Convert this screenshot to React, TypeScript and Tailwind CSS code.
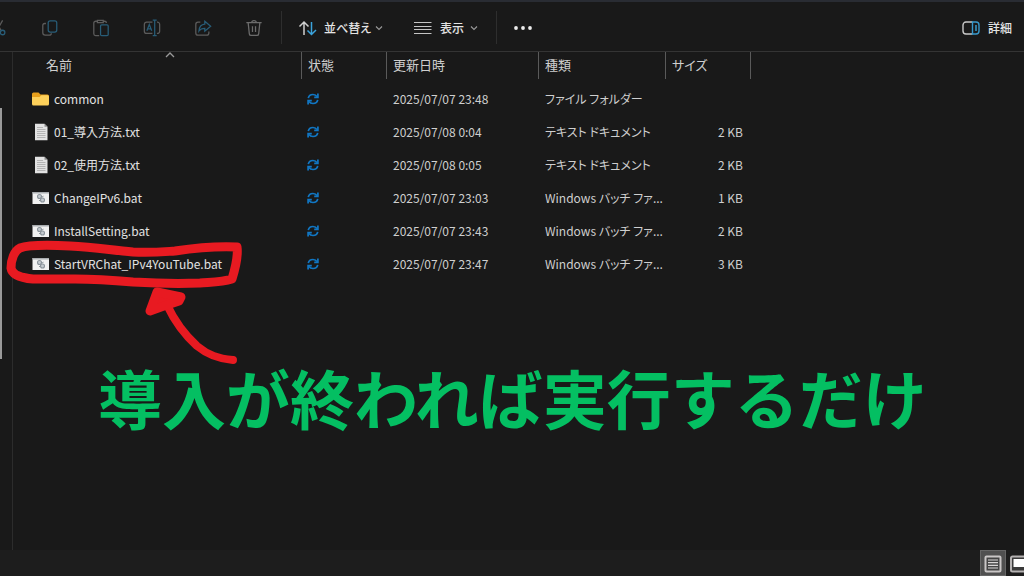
import React from 'react';

interface FileItem {
  name: string;
  date: string;
  type: string;
  size: string;
  icon: 'folder' | 'text' | 'batch';
}

const files: FileItem[] = [
  { name: 'common', date: '2025/07/07 23:48', type: 'ファイル フォルダー', size: '', icon: 'folder' },
  { name: '01_導入方法.txt', date: '2025/07/08 0:04', type: 'テキスト ドキュメント', size: '2 KB', icon: 'text' },
  { name: '02_使用方法.txt', date: '2025/07/08 0:05', type: 'テキスト ドキュメント', size: '2 KB', icon: 'text' },
  { name: 'ChangeIPv6.bat', date: '2025/07/07 23:03', type: 'Windows バッチ ファ...', size: '1 KB', icon: 'batch' },
  { name: 'InstallSetting.bat', date: '2025/07/07 23:43', type: 'Windows バッチ ファ...', size: '2 KB', icon: 'batch' },
  { name: 'StartVRChat_IPv4YouTube.bat', date: '2025/07/07 23:47', type: 'Windows バッチ ファ...', size: '3 KB', icon: 'batch' },
];

const FileIcon: React.FC<{ kind: FileItem['icon'] }> = ({ kind }) => {
  if (kind === 'folder') {
    return (
      <svg viewBox="0 0 18 16" className="w-[18px] h-4">
        <path d="M0 3a1.500 1.500 0 0 1 1.500-1.500h5L8.500 3.500H15.500A1.500 1.500 0 0 1 17 5v2H0z" fill="#e8a01c" />
        <path d="M0 6h7.500l2-1.700h6A1.500 1.500 0 0 1 17 5.800V13a1.500 1.500 0 0 1-1.500 1.500h-14A1.500 1.500 0 0 1 0 13z" fill="#fdd05a" />
      </svg>
    );
  }
  if (kind === 'text') {
    return (
      <svg viewBox="0 0 18 18" className="w-[18px] h-[18px]">
        <path d="M3 .8h9.500l3 3V17.200H3z" fill="#e2e2e2" />
        <path d="M12.500.8v3h3z" fill="#8c8c8c" />
        <path d="M5 4.500h6M5 6.500h8.500M5 8.500h8.500M5 10.500h8.500M5 12.500h8.500M5 14.500h8.500" stroke="#a8a8a8" strokeWidth=".8" />
      </svg>
    );
  }
  return (
    <svg viewBox="0 0 18 14" className="w-[18px] h-3.5">
      <path d="M.5 1H17v12H.5z" fill="#f1f1f1" />
      <path d="M.5 1H17v1.500H.5z" fill="#a9adb0" />
      <circle cx="7.500" cy="5.500" r="2" fill="#c5cbd0" stroke="#8a939a" strokeWidth="1.100" />
      <circle cx="10.500" cy="9" r="2" fill="#c5cbd0" stroke="#8a939a" strokeWidth="1.100" />
      <path d="M8.500 8.500 7 10M10 6l1.500-.8" stroke="#8b949b" strokeWidth="1" />
    </svg>
  );
};

const SyncIcon = () => (
  <svg viewBox="0 0 12 12" className="w-3 h-3" fill="none" stroke="#1177c4" strokeWidth="1.700">
    <path d="M1.300 5.200C1.700 3 3.600 1.500 6 1.500c1.700 0 3.200.8 4 2.200M10.700 6.800c-.4 2.200-2.300 3.700-4.700 3.700-1.700 0-3.200-.8-4-2.200" />
    <path d="M10.900.5v3.800H7.200M1.100 11.500V7.700h3.700" />
  </svg>
);

const Chevron = () => (
  <svg viewBox="0 0 8 8" className="w-2 h-2" fill="none" stroke="#9a9a9a" strokeWidth="1.100">
    <path d="M1 2.500 4 5.500l3-3" />
  </svg>
);

const tools = [
  {
    label: '切り取り',
    art: (
      <>
        <path d="m6 1.500 6.500 11.500M14 1.500 7.500 13" stroke="#5c5c5c" />
        <circle cx="6" cy="15" r="2.500" stroke="#285d78" />
        <circle cx="14" cy="15" r="2.500" stroke="#285d78" />
      </>
    ),
  },
  {
    label: 'コピー',
    art: (
      <>
        <path d="M5.500 5H4.300A2.300 2.300 0 0 0 2 7.300v8A2.700 2.700 0 0 0 4.700 18h4.500a2.300 2.300 0 0 0 2.300-2.200" stroke="#5c5c5c" />
        <rect x="8" y="2" width="9.500" height="12.500" rx="2.200" stroke="#285d78" />
      </>
    ),
  },
  {
    label: '貼り付け',
    art: (
      <>
        <path d="M8 18.500H4A2 2 0 0 1 2 16.500V4.500a2 2 0 0 1 2-2h1.500M12.500 2.500H14a2 2 0 0 1 2 2M6 1.500h6.500v2.500H6z" stroke="#5c5c5c" />
        <rect x="9.500" y="6.500" width="8.500" height="12" rx="1.300" stroke="#285d78" />
      </>
    ),
  },
  {
    label: '名前の変更',
    art: (
      <>
        <path d="M10.500 3.500H4A2.500 2.500 0 0 0 1.500 6v7.500A2.500 2.500 0 0 0 4 16h6.500M15.500 3.500A2.500 2.500 0 0 1 18.500 6v7.500a2.500 2.500 0 0 1-3 2.500" stroke="#5c5c5c" />
        <path d="M13 1.500v17M10.800 1.200h4.400M10.800 18.500h4.400M4.300 13l2.700-7 2.700 7M5.200 11h3.600" stroke="#285d78" />
      </>
    ),
  },
  {
    label: '共有',
    art: (
      <>
        <path d="M7 3.500H4.500A2.500 2.500 0 0 0 2 6v9.500A2.500 2.500 0 0 0 4.500 18H14a2.500 2.500 0 0 0 2.500-2.500V14" stroke="#5c5c5c" />
        <path d="M12 2.500 18.500 8 12 13.500v-3.200c-3 0-5 .7-6.500 3C5.800 9 8 6 12 5.700z" stroke="#285d78" />
      </>
    ),
  },
  {
    label: '削除',
    art: (
      <path d="M1.500 4h17M7.500 4c0-3 5-3 5 0M3.500 4l1.300 12.500a2 2 0 0 0 2 1.800h6.400a2 2 0 0 0 2-1.800L16.500 4M8.300 8v6.500M11.700 8v6.500" stroke="#6c6c6c" />
    ),
  },
];

const Toolbar = () => (
  <div className="h-[52px] shrink-0 flex items-center border-t-2 border-b border-t-[#292c33] border-b-[#343434] overflow-hidden pt-0.5 text-xs font-medium text-[#e4e4e4]">
    <div className="flex -ml-[27px]">
      {tools.map((tool) => (
        <button key={tool.label} aria-label={tool.label} className="w-[51px] h-9 shrink-0 flex items-center justify-center">
          <svg viewBox="0 0 20 20" className="w-[18px] h-[18px]" fill="none" strokeWidth="1.400">
            {tool.art}
          </svg>
        </button>
      ))}
    </div>
    <div className="w-px h-[33px] ml-0.5 bg-[#2e2e2e]" />
    <button className="flex items-center ml-4">
      <svg viewBox="0 0 20 16" className="w-5 h-4 mr-1.5" fill="none" strokeWidth="1.500">
        <path d="M6 15V2M1.500 6.500 6 2l4.500 4.500" stroke="#d0d0d0" />
        <path d="M13.500 2v12.500M9.500 10.500l4 4 4.500-4.500" stroke="#3ba3dc" />
      </svg>
      <span className="mr-1">並べ替え</span>
      <Chevron />
    </button>
    <button className="flex items-center ml-[31px]">
      <svg viewBox="0 0 18 14" className="w-[18px] h-3.5 mr-2" fill="none" stroke="#c4c4c4" strokeWidth="1">
        <path d="M0 1.500h17.500M0 5.500h17.500M0 8.500h17.500M0 12.500h17.500" />
      </svg>
      <span className="mr-1.5">表示</span>
      <Chevron />
    </button>
    <div className="w-px h-[33px] ml-[18px] bg-[#2e2e2e]" />
    <button aria-label="もっと見る" className="ml-4">
      <svg viewBox="0 0 20 6" className="w-5 h-1.5" fill="#ececec">
        <circle cx="3" cy="3" r="1.900" />
        <circle cx="10" cy="3" r="1.900" />
        <circle cx="17" cy="3" r="1.900" />
      </svg>
    </button>
    <button className="flex items-center ml-auto mr-3 gap-2">
      <svg viewBox="0 0 18 14" className="w-[18px] h-3.5" fill="none" strokeWidth="1.400">
        <path d="M10.500 1H4a3 3 0 0 0-3 3v6a3 3 0 0 0 3 3h6.500" stroke="#c8c8c8" />
        <path d="M10.500 1H14a3 3 0 0 1 3 3v6a3 3 0 0 1-3 3h-3.500zM13 5h2M13 7h2M13 9h2" stroke="#3799cc" />
      </svg>
      詳細
    </button>
  </div>
);

const headers = ['名前', '状態', '更新日時', '種類', 'サイズ'];

const FileTable = () => (
  <table className="w-full table-fixed text-left text-xs text-[#cfcfcf]">
    <colgroup>
      <col className="w-[289px]" />
      <col className="w-[85px]" />
      <col className="w-[152px]" />
      <col className="w-[127px]" />
      <col className="w-[85px]" />
      <col />
    </colgroup>
    <thead>
      <tr>
        {headers.map((header, index) => (
          <th key={header} className="p-0 pb-[3px] font-normal text-[13px]">
            <div className={`relative h-[27px] pb-0.5 flex items-center border-r border-[#5a5a5a] ${index === 0 ? 'pl-[33px]' : 'pl-1.5'}`}>
              {header}
              {index === 0 && (
                <svg viewBox="0 0 10 6" className="absolute top-0 left-[152px] w-2.5 h-1.5" fill="none" stroke="#9a9a9a" strokeWidth="1.300">
                  <path d="M1 5l4-4 4 4" />
                </svg>
              )}
            </div>
          </th>
        ))}
        <td></td>
      </tr>
    </thead>
    <tbody>
      {files.map((file) => (
        <tr key={file.name} className="h-[33px] whitespace-nowrap">
          <td className="p-0 pl-[19px]">
            <div className="flex items-center gap-1 text-[#e2e2e2]">
              <FileIcon kind={file.icon} />
              {file.name}
            </div>
          </td>
          <td className="p-0 pl-[5px]">
            <SyncIcon />
          </td>
          <td className="p-0 pl-1.5">{file.date}</td>
          <td className="p-0 pl-1.5">{file.type}</td>
          <td className="p-0 pr-2 text-right">{file.size}</td>
          <td></td>
        </tr>
      ))}
    </tbody>
  </table>
);

// Hand-drawn ring around the last file and the arrow pointing at it
const Marker = () => (
  <svg viewBox="0 0 260 140" className="absolute top-[184px] left-0 w-[260px] h-[140px] pointer-events-none" fill="none" stroke="#e81a21" strokeLinecap="round" strokeLinejoin="round">
    <path d="M20 12C28 9 50 9 70 10C95 11 110 14 133 16C150 17 160 16 175 15C195 12 215 10 237 11C238 18 236 30 232 43C222 46 212 46 200 47C175 48 150 47 133 46C110 44 95 43 75 43C55 43 45 43 33 43C22 42 12 39 11 32C11 24 14 15 20 12Z" strokeWidth="9" />
    <path d="M233 124C218 123 208 119 197 110C186 100 175 86 167 69" strokeWidth="8" />
    <path d="M157 56 181 61 179 65 161 71 150 75Z" fill="#e81a21" strokeWidth="9" />
  </svg>
);

const StatusBar = () => (
  <div className="h-[26px] shrink-0 flex justify-end bg-[#1d1d1d] overflow-hidden">
    <button aria-label="詳細表示" className="w-[26px] h-[26px] shrink-0 flex items-center justify-center bg-[#505050] border border-[#666]">
      <svg viewBox="0 0 18 18" className="w-[18px] h-[18px] mt-0.5">
        <rect x="1.500" y="1.500" width="15" height="15" rx="1" fill="#444" stroke="#c9c6c6" strokeWidth="2" />
        <path d="M4 5h10M4 7.700h10M4 10.400h10M4 13h10" stroke="#d8d5d5" strokeWidth="1.200" />
      </svg>
    </button>
    <button aria-label="大アイコン" className="w-[18px] h-[26px] shrink-0 pl-1 pt-0.5 overflow-hidden">
      <svg viewBox="0 0 14 18" className="w-3.5 h-[18px]">
        <path d="M16 1.500H2.500a1.500 1.500 0 0 0-1.500 1.500v12a1.500 1.500 0 0 0 1.500 1.500H16" fill="#3a3a3a" stroke="#b5b2b2" strokeWidth="2" />
        <path d="M3.500 4H14v8H3.500z" fill="#fff" />
      </svg>
    </button>
  </div>
);

const App: React.FC = () => {
  return (
    <div className="min-h-screen flex flex-col bg-[#191919] font-['Noto_Sans_CJK_JP',sans-serif] [font-feature-settings:'palt'] overflow-hidden">
      <Toolbar />
      <div className="relative flex-1 flex">
        <div className="w-3 shrink-0 pt-14">
          <div className="w-0.5 h-[251px] bg-[#9a9a9a]" />
        </div>
        <main className="flex-1 min-w-0 border-l border-[#2c2c2c]">
          <FileTable />
        </main>
        <Marker />
        <p className="absolute top-[296px] inset-x-0 pl-[98px] text-[64px] leading-[96px] font-bold whitespace-nowrap text-[#04bf62] [font-feature-settings:normal]">
          導入が終われば実行するだけ
        </p>
      </div>
      <StatusBar />
    </div>
  );
};

export default App;
